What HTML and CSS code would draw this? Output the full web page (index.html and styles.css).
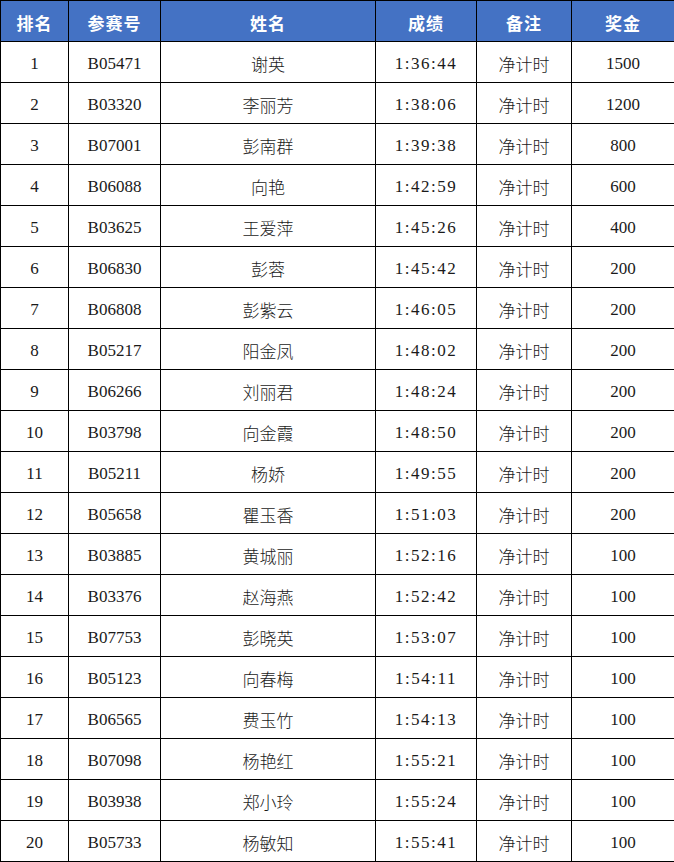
FILE: index.html
```html
<!DOCTYPE html>
<html lang="zh">
<head>
<meta charset="utf-8">
<link rel="stylesheet" href="styles.css">
</head>
<body>
<table class="results">
<colgroup>
<col class="c-rank"><col class="c-id"><col class="c-name"><col class="c-time"><col class="c-note"><col class="c-prize">
</colgroup>
<thead>
<tr><th>排名</th><th>参赛号</th><th>姓名</th><th>成绩</th><th>备注</th><th>奖金</th></tr>
</thead>
<tbody>
<tr><td class="num">1</td><td class="num">B05471</td><td class="cn">谢英</td><td class="time">1:36:44</td><td class="cn">净计时</td><td class="num">1500</td></tr>
<tr><td class="num">2</td><td class="num">B03320</td><td class="cn">李丽芳</td><td class="time">1:38:06</td><td class="cn">净计时</td><td class="num">1200</td></tr>
<tr><td class="num">3</td><td class="num">B07001</td><td class="cn">彭南群</td><td class="time">1:39:38</td><td class="cn">净计时</td><td class="num">800</td></tr>
<tr><td class="num">4</td><td class="num">B06088</td><td class="cn">向艳</td><td class="time">1:42:59</td><td class="cn">净计时</td><td class="num">600</td></tr>
<tr><td class="num">5</td><td class="num">B03625</td><td class="cn">王爱萍</td><td class="time">1:45:26</td><td class="cn">净计时</td><td class="num">400</td></tr>
<tr><td class="num">6</td><td class="num">B06830</td><td class="cn">彭蓉</td><td class="time">1:45:42</td><td class="cn">净计时</td><td class="num">200</td></tr>
<tr><td class="num">7</td><td class="num">B06808</td><td class="cn">彭紫云</td><td class="time">1:46:05</td><td class="cn">净计时</td><td class="num">200</td></tr>
<tr><td class="num">8</td><td class="num">B05217</td><td class="cn">阳金凤</td><td class="time">1:48:02</td><td class="cn">净计时</td><td class="num">200</td></tr>
<tr><td class="num">9</td><td class="num">B06266</td><td class="cn">刘丽君</td><td class="time">1:48:24</td><td class="cn">净计时</td><td class="num">200</td></tr>
<tr><td class="num">10</td><td class="num">B03798</td><td class="cn">向金霞</td><td class="time">1:48:50</td><td class="cn">净计时</td><td class="num">200</td></tr>
<tr><td class="num">11</td><td class="num">B05211</td><td class="cn">杨娇</td><td class="time">1:49:55</td><td class="cn">净计时</td><td class="num">200</td></tr>
<tr><td class="num">12</td><td class="num">B05658</td><td class="cn">瞿玉香</td><td class="time">1:51:03</td><td class="cn">净计时</td><td class="num">200</td></tr>
<tr><td class="num">13</td><td class="num">B03885</td><td class="cn">黄城丽</td><td class="time">1:52:16</td><td class="cn">净计时</td><td class="num">100</td></tr>
<tr><td class="num">14</td><td class="num">B03376</td><td class="cn">赵海燕</td><td class="time">1:52:42</td><td class="cn">净计时</td><td class="num">100</td></tr>
<tr><td class="num">15</td><td class="num">B07753</td><td class="cn">彭晓英</td><td class="time">1:53:07</td><td class="cn">净计时</td><td class="num">100</td></tr>
<tr><td class="num">16</td><td class="num">B05123</td><td class="cn">向春梅</td><td class="time">1:54:11</td><td class="cn">净计时</td><td class="num">100</td></tr>
<tr><td class="num">17</td><td class="num">B06565</td><td class="cn">费玉竹</td><td class="time">1:54:13</td><td class="cn">净计时</td><td class="num">100</td></tr>
<tr><td class="num">18</td><td class="num">B07098</td><td class="cn">杨艳红</td><td class="time">1:55:21</td><td class="cn">净计时</td><td class="num">100</td></tr>
<tr><td class="num">19</td><td class="num">B03938</td><td class="cn">郑小玲</td><td class="time">1:55:24</td><td class="cn">净计时</td><td class="num">100</td></tr>
<tr><td class="num">20</td><td class="num">B05733</td><td class="cn">杨敏知</td><td class="time">1:55:41</td><td class="cn">净计时</td><td class="num">100</td></tr>
</tbody>
</table>
</body>
</html>
```
FILE: styles.css
```css
html, body {
  margin: 0;
  padding: 0;
  background: #ffffff;
}
.results {
  border-collapse: collapse;
  table-layout: fixed;
  width: 674px;
}
.c-rank { width: 68px; }
.c-id { width: 92px; }
.c-name { width: 215px; }
.c-time { width: 101px; }
.c-note { width: 95px; }
.c-prize { width: 103px; }
.results th,
.results td {
  border: 1px solid #000;
  height: 41px;
  padding: 3px 0 0 0;
  text-align: center;
  vertical-align: middle;
  box-sizing: border-box;
  line-height: 20px;
}
.results th {
  background: #4472c4;
  color: #ffffff;
  font-family: "Noto Sans CJK SC", sans-serif;
  font-weight: 700;
  font-size: 17px;
  letter-spacing: 1px;
}
.results td {
  color: #1a1a1a;
}
.num {
  font-family: "Liberation Serif", serif;
  font-size: 17px;
}
.time {
  font-family: "Liberation Serif", serif;
  font-size: 17px;
  letter-spacing: 1.5px;
}
.cn {
  font-family: "Noto Sans CJK SC", sans-serif;
  font-size: 17px;
  font-weight: 300;
  color: #333;
}
```
